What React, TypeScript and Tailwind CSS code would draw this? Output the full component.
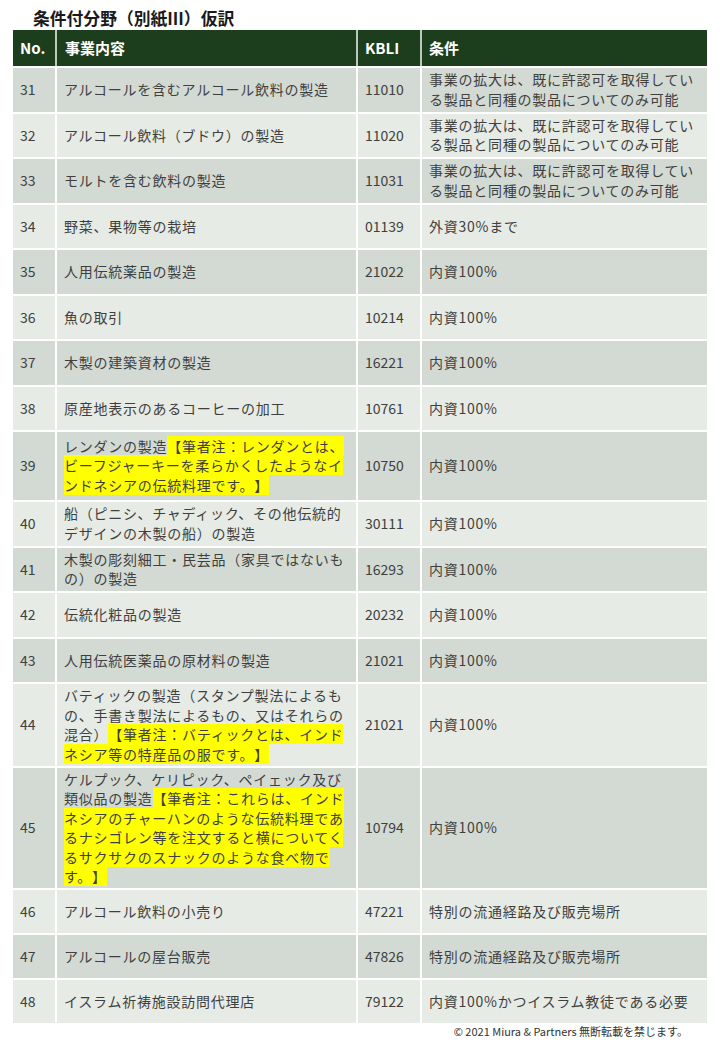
type Row = {
  no: string;
  h: string;
  desc: (string | { hl: string })[][];
  kbli: string;
  cond: string[];
};

const LIMIT = ['事業の拡大は、既に許認可を取得してい', 'る製品と同種の製品についてのみ可能'];

const rows: Row[] = [
  { no: '31', h: 'h-[45.5px]', desc: [['アルコールを含むアルコール飲料の製造']], kbli: '11010', cond: LIMIT },
  { no: '32', h: 'h-[45.5px]', desc: [['アルコール飲料（ブドウ）の製造']], kbli: '11020', cond: LIMIT },
  { no: '33', h: 'h-[45.5px]', desc: [['モルトを含む飲料の製造']], kbli: '11031', cond: LIMIT },
  { no: '34', h: 'h-[45.5px]', desc: [['野菜、果物等の栽培']], kbli: '01139', cond: ['外資30%まで'] },
  { no: '35', h: 'h-[45.5px]', desc: [['人用伝統薬品の製造']], kbli: '21022', cond: ['内資100%'] },
  { no: '36', h: 'h-[45.5px]', desc: [['魚の取引']], kbli: '10214', cond: ['内資100%'] },
  { no: '37', h: 'h-[45.5px]', desc: [['木製の建築資材の製造']], kbli: '16221', cond: ['内資100%'] },
  { no: '38', h: 'h-[45.5px]', desc: [['原産地表示のあるコーヒーの加工']], kbli: '10761', cond: ['内資100%'] },
  {
    no: '39',
    h: 'h-[70px]',
    desc: [
      ['レンダンの製造', { hl: '【筆者注：レンダンとは、' }],
      [{ hl: 'ビーフジャーキーを柔らかくしたようなイ' }],
      [{ hl: 'ンドネシアの伝統料理です。】' }],
    ],
    kbli: '10750',
    cond: ['内資100%'],
  },
  { no: '40', h: 'h-[45.5px]', desc: [['船（ピニシ、チャディック、その他伝統的'], ['デザインの木製の船）の製造']], kbli: '30111', cond: ['内資100%'] },
  { no: '41', h: 'h-[45.5px]', desc: [['木製の彫刻細工・民芸品（家具ではないも'], ['の）の製造']], kbli: '16293', cond: ['内資100%'] },
  { no: '42', h: 'h-[45.5px]', desc: [['伝統化粧品の製造']], kbli: '20232', cond: ['内資100%'] },
  { no: '43', h: 'h-[45.5px]', desc: [['人用伝統医薬品の原材料の製造']], kbli: '21021', cond: ['内資100%'] },
  {
    no: '44',
    h: 'h-[84px]',
    desc: [
      ['バティックの製造（スタンプ製法によるも'],
      ['の、手書き製法によるもの、又はそれらの'],
      ['混合）', { hl: '【筆者注：バティックとは、インド' }],
      [{ hl: 'ネシア等の特産品の服です。】' }],
    ],
    kbli: '21021',
    cond: ['内資100%'],
  },
  {
    no: '45',
    h: 'h-[122px]',
    desc: [
      ['ケルプック、ケリピック、ペイェック及び'],
      ['類似品の製造', { hl: '【筆者注：これらは、インド' }],
      [{ hl: 'ネシアのチャーハンのような伝統料理であ' }],
      [{ hl: 'るナシゴレン等を注文すると横についてく' }],
      [{ hl: 'るサクサクのスナックのような食べ物で' }],
      [{ hl: 'す。】' }],
    ],
    kbli: '10794',
    cond: ['内資100%'],
  },
  { no: '46', h: 'h-[45px]', desc: [['アルコール飲料の小売り']], kbli: '47221', cond: ['特別の流通経路及び販売場所'] },
  { no: '47', h: 'h-[45px]', desc: [['アルコールの屋台販売']], kbli: '47826', cond: ['特別の流通経路及び販売場所'] },
  { no: '48', h: 'h-[45px]', desc: [['イスラム祈祷施設訪問代理店']], kbli: '79122', cond: ['内資100%かつイスラム教徒である必要'] },
];

export default function App() {
  return (
    <div className="w-[720px] h-[1040px] bg-white text-[#3f3f3f] [text-spacing-trim:space-all] font-['Noto_Sans_CJK_JP','Noto_Sans',sans-serif]">
      <div className="h-[30px] pl-[33px] flex items-end">
        <h1 className="text-[16.8px] font-bold text-[#1a1a1a] leading-[20px] mb-[2px]">条件付分野（別紙III）仮訳</h1>
      </div>

      <div className="ml-[13px] w-[694px] flex flex-col">
        {/* header */}
        <div className="h-[36px] flex bg-[#1d3e1d] text-white font-bold text-[15px]">
          <div className="w-[42px] pl-[7px] flex items-center">No.</div>
          <div className="w-[301px] pl-[8px] border-l-2 border-[#e6ebe5]/80 flex items-center">事業内容</div>
          <div className="w-[64px] pl-[7px] border-l-2 border-[#e6ebe5]/80 flex items-center">KBLI</div>
          <div className="flex-1 pl-[7px] border-l-2 border-[#e6ebe5]/80 flex items-center">条件</div>
        </div>

        {rows.map((r, i) => (
          <div
            key={r.no}
            className={`${r.h} flex border-t-2 border-white text-[14px] leading-[19.5px] ${i % 2 === 0 ? 'bg-[#d2dad3]' : 'bg-[#e6ebe5]'}`}
          >
            <div className="w-[42px] pl-[7px] flex items-center">{r.no}</div>
            <div className="w-[301px] pl-[7px] border-l-2 border-white flex flex-col justify-center tracking-[0.75px] whitespace-nowrap">
              {r.desc.map((line, j) => (
                <div key={j}>
                  {line.map((part, k) =>
                    typeof part === 'string' ? (
                      <span key={k}>{part}</span>
                    ) : (
                      <span key={k} className="bg-[#ffff00]">{part.hl}</span>
                    ),
                  )}
                </div>
              ))}
            </div>
            <div className="w-[64px] pl-[7px] border-l-2 border-white flex items-center">{r.kbli}</div>
            <div className="flex-1 pl-[7px] border-l-2 border-white flex flex-col justify-center tracking-[0.75px] whitespace-nowrap">
              {r.cond.map((c, j) => (
                <div key={j}>{c}</div>
              ))}
            </div>
          </div>
        ))}
      </div>

      <div className="w-[688px] text-right text-[11px] leading-[14px] mt-[1px] text-[#333]">
        © 2021 Miura &amp; Partners 無断転載を禁じます。
      </div>
    </div>
  );
}
